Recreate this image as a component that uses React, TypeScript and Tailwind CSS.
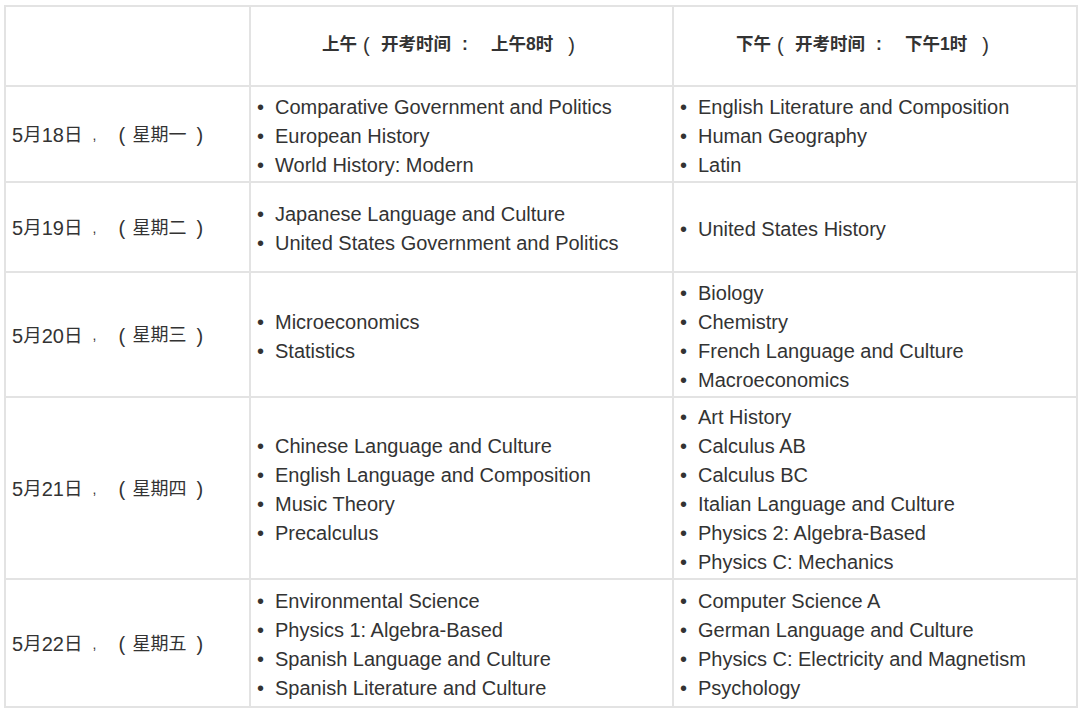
import React from "react";

const rows: { n1: string; n2: string; w: string; am: string[]; pm: string[]; h: string }[] = [
  {
    n1: "5",
    n2: "18",
    w: "星期一",
    am: ["Comparative Government and Politics", "European History", "World History: Modern"],
    pm: ["English Literature and Composition", "Human Geography", "Latin"],
    h: "h-[96px]",
  },
  {
    n1: "5",
    n2: "19",
    w: "星期二",
    am: ["Japanese Language and Culture", "United States Government and Politics"],
    pm: ["United States History"],
    h: "h-[90px]",
  },
  {
    n1: "5",
    n2: "20",
    w: "星期三",
    am: ["Microeconomics", "Statistics"],
    pm: ["Biology", "Chemistry", "French Language and Culture", "Macroeconomics"],
    h: "h-[125px]",
  },
  {
    n1: "5",
    n2: "21",
    w: "星期四",
    am: ["Chinese Language and Culture", "English Language and Composition", "Music Theory", "Precalculus"],
    pm: [
      "Art History",
      "Calculus AB",
      "Calculus BC",
      "Italian Language and Culture",
      "Physics 2: Algebra-Based",
      "Physics C: Mechanics",
    ],
    h: "h-[182px]",
  },
  {
    n1: "5",
    n2: "22",
    w: "星期五",
    am: [
      "Environmental Science",
      "Physics 1: Algebra-Based",
      "Spanish Language and Culture",
      "Spanish Literature and Culture",
    ],
    pm: [
      "Computer Science A",
      "German Language and Culture",
      "Physics C: Electricity and Magnetism",
      "Psychology",
    ],
    h: "h-[126px]",
  },
];

function List({ items }: { items: string[] }) {
  return (
    <ul className="flex flex-col pt-[3px]">
      {items.map((t) => (
        <li key={t} className="flex items-center h-[29px] whitespace-nowrap">
          <span className="w-[18px] shrink-0">•</span>
          <span>{t}</span>
        </li>
      ))}
    </ul>
  );
}

function Header({ a, t }: { a: string; t: string }) {
  return (
    <div className="flex items-center font-bold text-[17.5px] whitespace-nowrap">
      <span>{a}</span>
      <span className="inline-block w-[24px] pl-[6px] font-normal text-[20px]">(</span>
      <span>开考时间</span>
      <span className="inline-block w-[40px] pl-[11px]">:</span>
      <span>{a}</span>
      <span>{t}</span>
      <span>时</span>
      <span className="inline-block w-[24px] pl-[15px] font-normal text-[20px]">)</span>
    </div>
  );
}

export default function App() {
  return (
    <div
      className="w-[1080px] h-[712px] bg-white pt-[5px] pl-[4px] text-[#333333] text-[20px]"
      style={{ fontFamily: '"Liberation Sans", Arial, "Noto Sans CJK SC", sans-serif' }}
    >
      <div className="w-[1074px] border-[2px] border-[#e3e3e3] grid grid-cols-[245px_423px_1fr]">
        <div className="h-[80px] border-r-[2px] border-b-[2px] border-[#e3e3e3]" />
        <div className="h-[80px] border-r-[2px] border-b-[2px] border-[#e3e3e3] flex items-center pl-[71px] pb-[3px]">
          <Header a="上午" t="8" />
        </div>
        <div className="h-[80px] border-b-[2px] border-[#e3e3e3] flex items-center pl-[62px] pb-[3px]">
          <Header a="下午" t="1" />
        </div>
        {rows.map((r, i) => {
          const last = i === rows.length - 1;
          const b = last ? "" : "border-b-[2px]";
          return (
            <React.Fragment key={r.n2}>
              <div className={`${r.h} ${b} border-r-[2px] border-[#e3e3e3] flex items-center pl-[6px] pt-[2px] whitespace-nowrap`}>
                <span>{r.n1}</span>
                <span className="text-[18.5px]">月</span>
                <span>{r.n2}</span>
                <span className="text-[18.5px]">日</span>
                <span className="inline-block w-[36px] pl-[10px] text-[14px]">,</span>
                <span className="inline-block w-[14px]">(</span>
                <span className="text-[18px]">{r.w}</span>
                <span className="inline-block pl-[10px]">)</span>
              </div>
              <div className={`${r.h} ${b} border-r-[2px] border-[#e3e3e3] flex items-center pl-[6px]`}>
                <List items={r.am} />
              </div>
              <div className={`${r.h} ${b} border-[#e3e3e3] flex items-center pl-[6px]`}>
                <List items={r.pm} />
              </div>
            </React.Fragment>
          );
        })}
      </div>
    </div>
  );
}
